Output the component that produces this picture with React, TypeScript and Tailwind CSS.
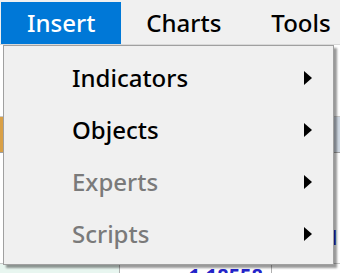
import React from "react";

const items = [
  { label: "Indicators", enabled: true },
  { label: "Objects", enabled: true },
  { label: "Experts", enabled: false },
  { label: "Scripts", enabled: false },
];

function Arrow() {
  return (
    <svg width="10" height="14" viewBox="0 0 10 14" className="shrink-0">
      <path d="M1 0 L9 7 L1 14 Z" fill="#000" />
    </svg>
  );
}

export default function App() {
  return (
    <div
      className="relative w-[340px] h-[273px] overflow-hidden bg-white font-medium"
      style={{ fontFamily: '"Noto Sans", "Open Sans", sans-serif' }}
    >
      {/* Menu bar */}
      <div className="flex h-[45px] pt-[2px] bg-[#f0f0f0] border-b border-[#d9d9d9] text-[24px] leading-none">
        <div className="ml-px flex items-center px-[26px] bg-[#0078d7] text-white">Insert</div>
        <div className="flex items-center px-[25px] text-black">Charts</div>
        <div className="flex items-center px-[25px] text-black">Tools</div>
      </div>

      {/* Window behind the menu */}
      <div className="flex flex-col">
        <div className="h-[72px] border-b border-[#c8c8c8]" />
        <div className="h-[36px] bg-[#cfd8e3] border-b border-[#a0a0a0] flex">
          <div className="w-[3px] h-full bg-[#d9a046]" />
        </div>
        <div className="h-[72px]" />
        <div className="h-[38px] flex justify-end pr-px">
          <span className="text-[22px] font-bold text-[#2323c8] leading-none">1</span>
        </div>
        <div className="h-[30px] flex border-t border-[#c8c8c8]">
          <div className="w-[120px] border-r border-[#b0b0b0] bg-[#e8f6f0]" />
          <div className="w-[152px] border-r border-[#b0b0b0] flex justify-end pr-[8px] pt-[2px]">
            <span className="text-[20px] font-bold text-[#2323c8] leading-none">1.18558</span>
          </div>
          <div className="flex-1" />
        </div>
      </div>

      {/* Dropdown */}
      <div className="absolute left-[3px] top-[45px] w-[331px] h-[220px] bg-[#f0f0f0] border border-[#a0a0a0] shadow-[3px_3px_2px_rgba(0,0,0,0.4)] pt-[6px]">
        {items.map((it) => (
          <div key={it.label} className="flex items-center h-[52px] pl-[68px] pr-[20px]">
            <span
              className={
                "flex-1 text-[24px] leading-none " +
                (it.enabled ? "text-black" : "text-[#7a7a7a]")
              }
            >
              {it.label}
            </span>
            <Arrow />
          </div>
        ))}
      </div>
    </div>
  );
}
